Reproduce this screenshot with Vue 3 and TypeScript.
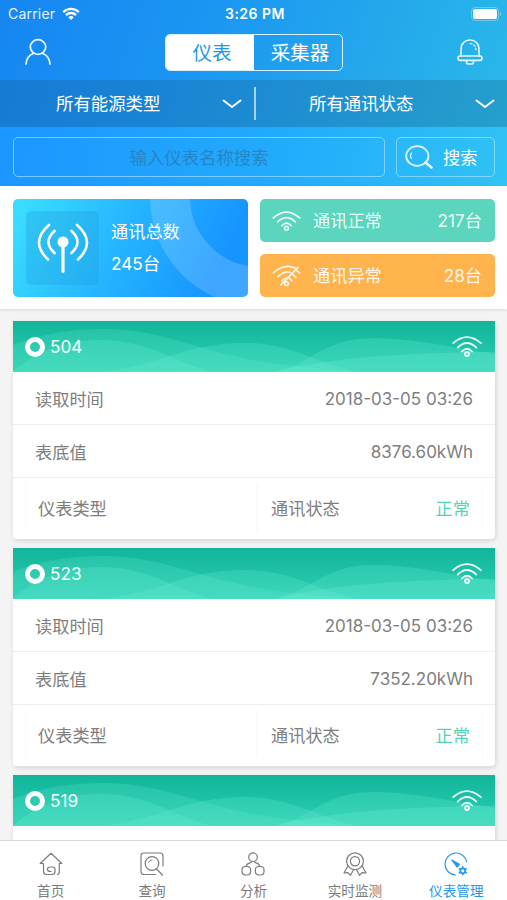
<script setup lang="ts">
interface Meter {
  id: string
  time?: string
  value?: string
}

const meters: Meter[] = [
  { id: '504', time: '2018-03-05 03:26', value: '8376.60kWh' },
  { id: '523', time: '2018-03-05 03:26', value: '7352.20kWh' },
  { id: '519' },
]

const tabs: string[] = ['首页', '查询', '分析', '实时监测', '仪表管理']
</script>

<template>
  <div class="phone">
    <header class="top">
      <div class="status">
        <div class="carrier">
          <span>Carrier</span>
          <svg width="18" height="13" viewBox="0 0 18 13" fill="none" stroke="#fff" stroke-width="2.3">
            <path d="M1.2 5.2a11 11 0 0 1 15.6 0M4 8.1a7 7 0 0 1 10 0" />
            <path d="M6.3 10.2a4 4 0 0 1 5.4 0L9 13z" fill="#fff" stroke="none" />
          </svg>
        </div>
        <span class="clock">3:26 PM</span>
        <svg class="battery" width="31" height="14" viewBox="0 0 31 14">
          <rect x=".5" y=".5" width="27" height="13" rx="3.5" fill="none" stroke="#fff" stroke-opacity=".3" />
          <rect x="2" y="2" width="24" height="10" rx="2" fill="#fff" />
          <path d="M29 4.8q2 2.2 0 4.4z" fill="#fff" opacity=".5" />
        </svg>
      </div>

      <div class="nav">
        <svg width="26" height="28" viewBox="0 0 26 28" fill="none" stroke="#e4f5ff" stroke-width="1.8" stroke-linecap="round">
          <ellipse cx="13" cy="9" rx="7.7" ry="7.3" />
          <path d="M1 26c.5-5.5 3.3-9 7.2-10.5M25 26c-.5-5.5-3.3-9-7.2-10.5" />
        </svg>
        <div class="segment">
          <span class="on">仪表</span>
          <span>采集器</span>
        </div>
        <svg width="26" height="28" viewBox="0 0 26 28" fill="none" stroke="#e4f7ff" stroke-width="1.6" stroke-linecap="round" stroke-linejoin="round">
          <path d="M4 18V11.5C4 5.5 8 2 13 2s9 3.5 9 9.5V18" />
          <rect x="1" y="18" width="24" height="4.4" rx="2.2" />
          <path d="M9.5 22.5v2q0 1.5 1.5 1.5h4q1.5 0 1.5-1.5v-2" />
          <path d="M13 5.5c3.5.3 5.6 2.5 6 6.3" stroke-width="1.2" stroke-dasharray="2 2" />
        </svg>
      </div>

      <div class="filters">
        <div class="filter">
          <span>所有能源类型</span>
          <svg width="20" height="10" viewBox="0 0 20 10" fill="none" stroke="#fff" stroke-width="2" stroke-linecap="round" stroke-linejoin="round"><path d="M1.5 1.5 10 8l8.5-6.5" /></svg>
        </div>
        <div class="filter second">
          <span>所有通讯状态</span>
          <svg width="20" height="10" viewBox="0 0 20 10" fill="none" stroke="#fff" stroke-width="2" stroke-linecap="round" stroke-linejoin="round"><path d="M1.5 1.5 10 8l8.5-6.5" /></svg>
        </div>
      </div>

      <div class="search">
        <div class="field">输入仪表名称搜索</div>
        <div class="go">
          <svg width="28" height="24" viewBox="0 0 28 24" fill="none" stroke="#dff5ff" stroke-width="1.8" stroke-linecap="round">
            <ellipse cx="12.3" cy="11" rx="11.2" ry="9.8" />
            <path d="m20.5 17.500 6 5" stroke-width="2.6" />
            <path d="M6.5 8q-2 2.800 0 5.600" stroke-width="1.1" />
          </svg>
          <span>搜索</span>
        </div>
      </div>
    </header>

    <section class="summary">
      <div class="total">
        <div class="antenna">
          <svg width="52" height="52" viewBox="0 0 52 52" fill="none" stroke="#fff" stroke-width="2.6" stroke-linecap="round">
            <circle cx="26" cy="20" r="5.5" fill="#fff" stroke="none" />
            <path d="M26 22v27.500" stroke-width="3.2" />
            <path d="M17.500 9Q5.500 20 17.500 31M34.500 9q12 11 0 22M12 3Q-7.500 20 11 37.500M40 3q19.500 17 1 34.500" />
          </svg>
        </div>
        <div class="total-text">
          <span>通讯总数</span>
          <span>245台</span>
        </div>
      </div>
      <div class="states">
        <div class="state normal">
          <svg width="29" height="20" viewBox="0 0 30 21" fill="none" stroke="#fff" stroke-opacity=".9" stroke-width="1.7" stroke-linecap="round">
            <path d="M1.200 7.200Q15-5 28.800 7.200M5.800 11.500Q15 2.500 24.200 11.500M10 15.500q5-5.500 10 0" />
            <circle cx="15" cy="18" r="2" />
          </svg>
          <span class="label">通讯正常</span>
          <span>217台</span>
        </div>
        <div class="state fault">
          <svg width="29" height="22" viewBox="0 0 30 23" fill="none" stroke="#fff" stroke-opacity=".9" stroke-width="1.6" stroke-linecap="round">
            <path d="M1.200 8.200Q13-2 24 3.200M5.800 12.500Q12 6 19 7.500M10 16.500q2.500-3 5-3M9 21 27 2.500M25.300 5.500l3.500 3M21.300 9.500l3.500 3.500M17.500 13.500l3 3" />
            <circle cx="15" cy="19.500" r="2" />
          </svg>
          <span class="label">通讯异常</span>
          <span>28台</span>
        </div>
      </div>
    </section>

    <main class="list">
      <article v-for="m in meters" :key="m.id" class="card">
        <div class="card-head">
          <svg class="waves" viewBox="0 0 482 51" preserveAspectRatio="none" fill="#6deed6">
            <path d="M0 24C30 12 60 8 90 8 145 8 180 27 235 38 270 45 310 47 345 51H0z" opacity=".2" />
            <path d="M0 51C25 28 55 19 88 19c50 0 75 24 112 32z" opacity=".24" />
            <path d="M85 51C150 45 170 22 232 22c45 0 70 19 112 29z" opacity=".24" />
            <path d="M262 51C300 42 310 17 362 17 400 17 440 27 482 33V51z" opacity=".24" />
            <path d="M262 51C310 37 400 31 482 31V51z" opacity=".28" />
          </svg>
          <div class="meter-id"><i class="ring" /><span>{{ m.id }}</span></div>
          <svg class="signal" width="30" height="21" viewBox="0 0 30 21" fill="none" stroke="#effffb" stroke-width="1.8" stroke-linecap="round">
            <path d="M1.200 7.200Q15-5 28.800 7.200M5.800 11.500Q15 2.500 24.200 11.500M10 15.500q5-5.500 10 0" />
            <circle cx="15" cy="18" r="2" />
          </svg>
        </div>
        <template v-if="m.time">
          <div class="row"><span>读取时间</span><span class="num">{{ m.time }}</span></div>
          <div class="row"><span>表底值</span><span class="num">{{ m.value }}</span></div>
          <div class="row-last">
            <div class="cell"><span>仪表类型</span></div>
            <div class="cell"><span>通讯状态</span><span class="ok">正常</span></div>
          </div>
        </template>
      </article>
    </main>

    <nav class="tabs">
      <div v-for="(t, i) in tabs" :key="t" class="tab" :class="{ active: i === 4 }">
        <svg width="24" height="24" viewBox="0 0 24 24" fill="none" stroke="currentColor" stroke-width="1.2" stroke-linecap="round" stroke-linejoin="round">
          <template v-if="i === 0">
            <path d="M4.500 11.500H1.200L12 1.200l10.800 10.300h-2.500v8q0 3-2 3M4.500 11.500v8q0 3 3 3H13q3 0 3-3v-2q0-2.500-2.500-2.500h-2.500q-2.500 0-2.500 2.200t2.200 2.200H12" />
          </template>
          <template v-else-if="i === 1">
            <path d="M15.500 22.500H4q-3 0-3-3V4q0-3 3-3h16q3 0 3 3v10M16.500 17l6 6" />
            <circle cx="12" cy="11.500" r="6.800" />
            <path d="M8.500 10.500q1-2.500 3.500-2.500" stroke-width=".9" />
          </template>
          <template v-else-if="i === 2">
            <circle cx="12" cy="5.200" r="4.300" />
            <rect x="1" y="14.500" width="8.600" height="8.500" rx="3.400" />
            <rect x="14.400" y="14.500" width="8.600" height="8.500" rx="3.400" />
            <path d="M10.500 9.500c0 2.500-5.200.5-5.200 5M13.500 9.500c0 2.500 5.200.5 5.200 5" />
          </template>
          <template v-else-if="i === 3">
            <circle cx="12" cy="9.200" r="8.400" />
            <circle cx="12" cy="9.200" r="4.600" />
            <path d="m4.800 14-3.800 7 4-.3 2.500 2.600 3-5.500M19.200 14l3.800 7-4-.3-2.500 2.600-3-5.500" />
          </template>
          <template v-else>
            <path d="M11.500 23A11 11 0 1 1 22.800 10" />
            <path d="m7.800 8 7.700 4.300-2.500 2.700z" fill="currentColor" />
            <circle cx="18.800" cy="18.800" r="2.500" stroke-width="1.800" />
            <path d="M18.800 14.900v.6M18.800 22.100v.6M15.400 16.800l.5.300M21.700 20.500l.5.300M15.400 20.800l.5-.3M21.700 17.100l.5-.3" stroke-width="1.600" />
          </template>
        </svg>
        <span>{{ t }}</span>
      </div>
    </nav>
  </div>
</template>

<style>
body {
  margin: 0;
}
</style>

<style scoped>
.phone {
  width: 507px;
  height: 900px;
  overflow: hidden;
  display: flex;
  flex-direction: column;
  background: #f4f4f5;
  font-family: Inter, "Noto Sans CJK SC", sans-serif;
  color: #7e7e7e;
  font-size: 17.2px;
}
.phone *,
.phone *::before,
.phone *::after {
  box-sizing: border-box;
}
svg {
  display: block;
  flex: none;
}
.top {
  flex: none;
  height: 186px;
  color: #fff;
  background: linear-gradient(110deg, #1686f1 0%, #1a95f3 35%, #24a9eb 70%, #2bbbe9 100%);
}
.status {
  height: 27px;
  display: grid;
  grid-template-columns: 1fr auto 1fr;
  align-items: center;
  padding: 0 5px 0 8px;
  font-size: 14px;
}
.carrier {
  display: flex;
  gap: 7px;
  align-items: center;
  letter-spacing: 0.2px;
  color: #e3f2ff;
}
.clock {
  font-weight: 600;
  letter-spacing: 0.5px;
}
.battery {
  justify-self: end;
}
.nav {
  height: 53px;
  display: flex;
  align-items: center;
  justify-content: space-between;
  padding: 0 24px 3px 25px;
}
.segment {
  width: 178px;
  height: 37px;
  display: grid;
  grid-template-columns: 88px 1fr;
  border: 1.5px solid #d9f2ff;
  border-radius: 5px;
  overflow: hidden;
  font-size: 19.5px;
  line-height: 36px;
  text-align: center;
}
.segment span {
  padding-left: 4px;
}
.on {
  background: #fff;
  color: #2196ed;
}
.filters {
  height: 47px;
  display: grid;
  grid-template-columns: 254px 253px;
  background: rgba(24, 85, 125, 0.25);
}
.filter {
  position: relative;
  display: flex;
  align-items: center;
  justify-content: space-between;
  padding: 0 12px 0 56px;
  line-height: 47px;
  font-size: 17.4px;
}
.second {
  padding-left: 55px;
}
.second::before {
  content: "";
  position: absolute;
  left: 0;
  top: 7px;
  width: 1.5px;
  height: 33px;
  background: #a4d3ee;
}
.search {
  height: 59px;
  display: flex;
  gap: 11px;
  padding: 10px 12px 9px 13px;
  background: linear-gradient(100deg, #1c96ff, #22abfc 55%, #30c3f4);
}
.field,
.go {
  height: 40px;
  border: 1.5px solid rgba(170, 228, 255, 0.65);
  border-radius: 5px;
  line-height: 39px;
}
.field {
  width: 372px;
  text-align: center;
  color: #2685c6;
  font-size: 17.4px;
}
.go {
  flex: 1;
  display: flex;
  align-items: center;
  gap: 10px;
  padding-left: 8px;
}
.summary {
  flex: none;
  height: 123px;
  display: flex;
  gap: 12px;
  padding: 13px 12px 12px 13px;
  background: #fff;
  box-shadow: 0 1px 3px rgba(0, 0, 0, 0.13);
  color: #fff;
}
.total {
  position: relative;
  overflow: hidden;
  width: 235px;
  height: 98px;
  display: flex;
  align-items: center;
  gap: 12px;
  padding-left: 13px;
  border-radius: 5px;
  background: linear-gradient(115deg, #39dcff 5%, #25b5ff 45%, #1795ff 85%);
}
.total::after {
  content: "";
  position: absolute;
  width: 220px;
  height: 220px;
  left: 137px;
  top: -112px;
  border: 40px solid rgba(255, 255, 255, 0.17);
  border-radius: 50%;
}
.antenna {
  width: 73px;
  height: 74px;
  display: grid;
  place-items: center;
  border-radius: 5px;
  background: rgba(33, 158, 220, 0.33);
}
.total-text {
  position: relative;
  z-index: 1;
  display: flex;
  flex-direction: column;
  gap: 8px;
  line-height: 24px;
}
.states {
  width: 235px;
  display: flex;
  flex-direction: column;
  gap: 12px;
}
.state {
  height: 43px;
  display: flex;
  align-items: center;
  padding: 0 13px 0 12px;
  border-radius: 5px;
  line-height: 43px;
  color: rgba(255, 255, 255, 0.9);
}
.label {
  flex: 1;
  padding-left: 12px;
}
.normal {
  background: #5bd5be;
}
.fault {
  background: #ffb34d;
}
.list {
  flex: 1;
  min-height: 0;
  overflow: hidden;
  display: flex;
  flex-direction: column;
  gap: 9.5px;
  padding: 12px 12px 0 13px;
}
.card {
  flex: none;
  height: 217.7px;
  background: #fff;
  border-radius: 0 0 4px 4px;
  box-shadow: 1px 2px 5px rgba(0, 0, 0, 0.13);
}
.card-head {
  position: relative;
  height: 51px;
  display: flex;
  align-items: center;
  justify-content: space-between;
  padding: 0 13px 0 12px;
  color: #f4fffc;
  background: linear-gradient(#12b59b, #2bcfb2);
}
.waves {
  position: absolute;
  inset: 0;
  width: 100%;
  height: 100%;
}
.meter-id {
  position: relative;
  display: flex;
  align-items: center;
  gap: 5px;
}
.signal {
  position: relative;
}
.ring {
  width: 20px;
  height: 20px;
  border: 5px solid #fff;
  border-radius: 50%;
}
.row {
  height: 53px;
  display: flex;
  align-items: center;
  justify-content: space-between;
  padding: 0 22px;
  border-bottom: 1.5px solid #eee;
}
.num {
  padding-top: 1px;
  font-size: 17px;
}
.row-last {
  height: 60px;
  display: grid;
  grid-template-columns: 232px 226px;
  padding: 5px 12px 7px 12px;
}
.cell {
  display: flex;
  align-items: center;
  justify-content: space-between;
  padding: 0 12px;
  border-left: 1px solid #fafafa;
  border-right: 1px solid #fafafa;
}
.cell + .cell {
  padding-left: 13px;
}
.ok {
  color: #53d5b7;
}
.tabs {
  position: relative;
  flex: none;
  height: 60px;
  display: grid;
  grid-template-columns: repeat(5, 1fr);
  background: #fff;
  border-top: 1px solid #d9d9d9;
}
.tab {
  display: flex;
  flex-direction: column;
  align-items: center;
  gap: 6px;
  padding-top: 11px;
  font-size: 13.6px;
  line-height: 18px;
  color: #7c7c7c;
}
.active {
  color: #2498ef;
}
</style>
